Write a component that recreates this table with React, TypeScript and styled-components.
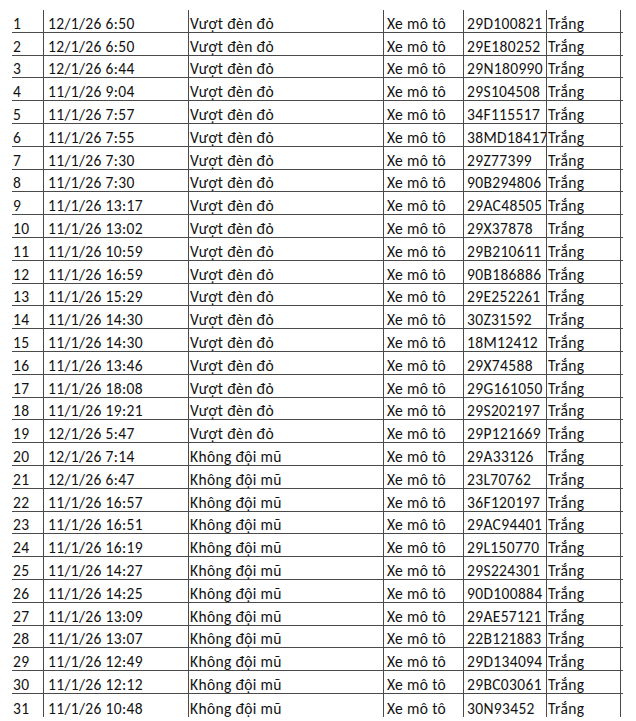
import React, { FC } from 'react';
import styled, { createGlobalStyle } from 'styled-components';

type Violation = [string, string, string];

// id is the index + 1, vehicle and colour are the same everywhere
const RED = 'Vượt đèn đỏ';
const HELMET = 'Không đội mũ';

const rows: Violation[] = [
  ['12/1/26 6:50', RED, '29D100821'],
  ['12/1/26 6:50', RED, '29E180252'],
  ['12/1/26 6:44', RED, '29N180990'],
  ['11/1/26 9:04', RED, '29S104508'],
  ['11/1/26 7:57', RED, '34F115517'],
  ['11/1/26 7:55', RED, '38MD18417'],
  ['11/1/26 7:30', RED, '29Z77399'],
  ['11/1/26 7:30', RED, '90B294806'],
  ['11/1/26 13:17', RED, '29AC48505'],
  ['11/1/26 13:02', RED, '29X37878'],
  ['11/1/26 10:59', RED, '29B210611'],
  ['11/1/26 16:59', RED, '90B186886'],
  ['11/1/26 15:29', RED, '29E252261'],
  ['11/1/26 14:30', RED, '30Z31592'],
  ['11/1/26 14:30', RED, '18M12412'],
  ['11/1/26 13:46', RED, '29X74588'],
  ['11/1/26 18:08', RED, '29G161050'],
  ['11/1/26 19:21', RED, '29S202197'],
  ['12/1/26 5:47', RED, '29P121669'],
  ['12/1/26 7:14', HELMET, '29A33126'],
  ['12/1/26 6:47', HELMET, '23L70762'],
  ['11/1/26 16:57', HELMET, '36F120197'],
  ['11/1/26 16:51', HELMET, '29AC94401'],
  ['11/1/26 16:19', HELMET, '29L150770'],
  ['11/1/26 14:27', HELMET, '29S224301'],
  ['11/1/26 14:25', HELMET, '90D100884'],
  ['11/1/26 13:09', HELMET, '29AE57121'],
  ['11/1/26 13:07', HELMET, '22B121883'],
  ['11/1/26 12:49', HELMET, '29D134094'],
  ['11/1/26 12:12', HELMET, '29BC03061'],
  ['11/1/26 10:48', HELMET, '30N93452'],
];

const GlobalStyle = createGlobalStyle`
  html, body {
    margin: 0;
    padding: 0;
    background: #ffffff;
  }
`;

const Sheet = styled.div`
  padding: 10px 0 0 12px;
  font-family: Carlito, Lato, 'Liberation Sans', sans-serif;
  font-size: 15.5px;
  letter-spacing: 0.35px;
  color: #111;
`;

const Row = styled.div`
  display: grid;
  grid-template-columns: 32px 145px 195px 80px 83px 74px 2px;
  width: 611px;
  height: 22.8px;
  box-sizing: border-box;
  border-bottom: 1px solid #4a4a4a;

  &:last-child {
    border-bottom: none;
  }
`;

const Cell = styled.div<{ $pad: number; $line?: boolean }>`
  display: flex;
  align-items: flex-end;
  padding: 0 0 0 ${(p) => p.$pad}px;
  border-right: ${(p) => (p.$line === false ? 'none' : '1px solid #4a4a4a')};
  line-height: 16px;
  white-space: nowrap;
  overflow: hidden;
  min-width: 0;
`;

export const ViolationRow: FC<{ index: number; item: Violation }> = ({
  index,
  item,
}) => {
  const [time, kind, plate] = item;
  return (
    <Row>
      <Cell $pad={1}>{index + 1}</Cell>
      <Cell $pad={4}>{time}</Cell>
      <Cell $pad={1}>{kind}</Cell>
      <Cell $pad={3}>{'Xe mô tô'}</Cell>
      <Cell $pad={3}>{plate}</Cell>
      <Cell $pad={1}>{'Trắng'}</Cell>
      <Cell $pad={0} $line={false} />
    </Row>
  );
};

export default function App() {
  return (
    <>
      <GlobalStyle />
      <Sheet>
        {rows.map((item, i) => (
          <ViolationRow key={i} index={i} item={item} />
        ))}
      </Sheet>
    </>
  );
}
